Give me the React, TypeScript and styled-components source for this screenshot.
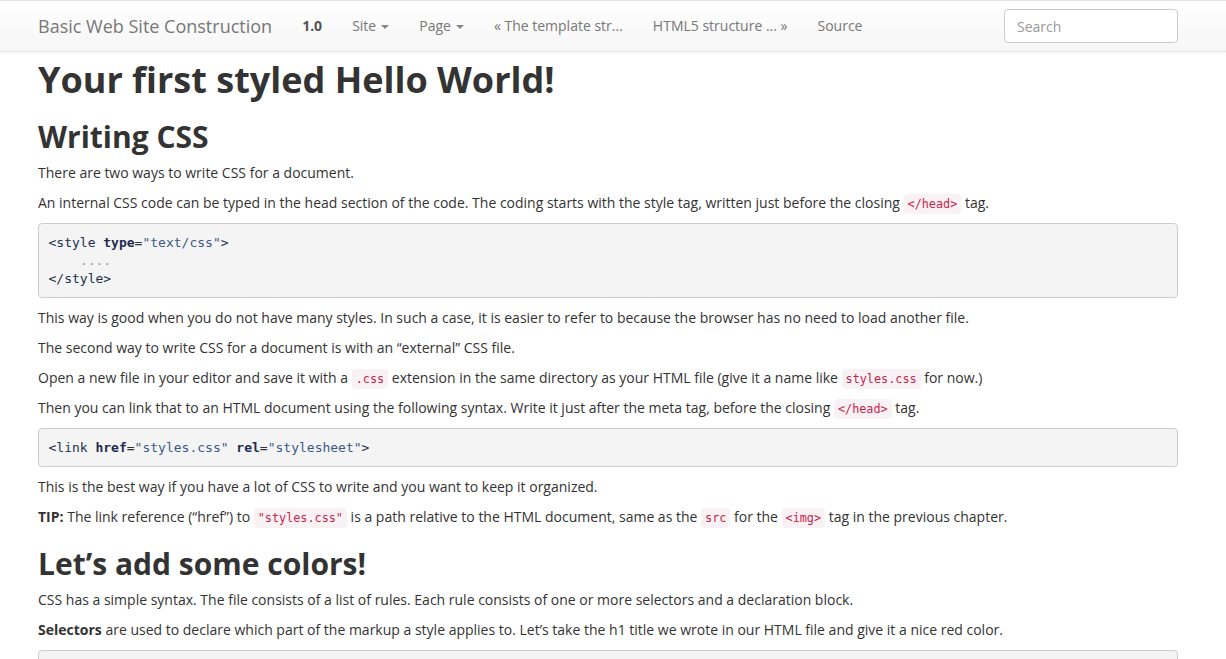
import React from "react";
import styled, { createGlobalStyle } from "styled-components";

const Global = createGlobalStyle`
  html, body { margin: 0; padding: 0; background: #fff; }
  body {
    font-family: "Open Sans", "Helvetica Neue", Arial, sans-serif;
    font-size: 14px;
    line-height: 20px;
    color: #333;
  }
  * { box-sizing: border-box; }
`;

const NavBar = styled.nav`
  height: 52px;
  border-top: 1px solid #e3e3e3;
  border-bottom: 1px solid #e3e3e3;
  background: linear-gradient(to bottom, #ffffff 0%, #f6f6f6 100%);
  box-shadow: 0 1px 5px rgba(0, 0, 0, 0.05);
`;

const NavInner = styled.div`
  width: 1140px;
  margin-left: 38px;
  height: 50px;
  display: flex;
  align-items: center;
`;

const Brand = styled.a`
  font-size: 18px;
  color: #777;
  text-decoration: none;
  margin-right: 15px;
  line-height: 20px;
`;

const NavList = styled.ul`
  display: flex;
  list-style: none;
  margin: 0;
  padding: 0;
  flex: 1;
`;

const NavItem = styled.li<{ $active?: boolean }>`
  padding: 15px;
  line-height: 20px;
  color: ${(p) => (p.$active ? "#555" : "#777")};
  font-weight: ${(p) => (p.$active ? 700 : 400)};
  white-space: nowrap;
`;

const Caret = styled.span`
  display: inline-block;
  width: 0;
  height: 0;
  margin-left: 5px;
  vertical-align: middle;
  border-top: 4px solid #888;
  border-left: 4px solid transparent;
  border-right: 4px solid transparent;
`;

const Search = styled.input`
  width: 174px;
  height: 34px;
  padding: 6px 12px;
  border: 1px solid #ccc;
  border-radius: 4px;
  font-family: "Open Sans", Arial, sans-serif;
  font-size: 14px;
  color: #555;
  background: #fff;
  &::placeholder { color: #999; }
`;

const Container = styled.main`
  width: 1140px;
  margin-left: 38px;
`;

const H1 = styled.h1`
  font-size: 36px;
  font-weight: 700;
  line-height: 1.1;
  margin: 8px 0 10px;
  color: #333;
`;

const H2 = styled.h2`
  font-size: 30px;
  font-weight: 700;
  line-height: 1.1;
  margin: 20px 0 10px;
  color: #333;
`;

const P = styled.p`
  margin: 0 0 10px;
`;

const Code = styled.code`
  font-family: "DejaVu Sans Mono", monospace;
  font-size: 11.8px;
  line-height: 1;
  padding: 3px 4px;
  color: #c7254e;
  background: #f9f2f4;
  border-radius: 4px;
`;

const Pre = styled.pre`
  font-family: "DejaVu Sans Mono", monospace;
  font-size: 13px;
  line-height: 18px;
  padding: 10px 9.5px 9px;
  margin: 0 0 10px;
  color: #333;
  background: #f4f4f4;
  border: 1px solid #ccc;
  border-radius: 4px;
  white-space: pre;
`;

const Tag = styled.span`
  color: #22304d;
`;
const Attr = styled.span`
  color: #1e2b50;
  font-weight: 700;
`;
const Str = styled.span`
  color: #3d5a86;
`;
const Dots = styled.span`
  color: #999;
`;

export default function App() {
  return (
    <>
      <Global />
      <NavBar>
        <NavInner>
          <Brand>Basic Web Site Construction</Brand>
          <NavList>
            <NavItem $active>1.0</NavItem>
            <NavItem>
              Site<Caret />
            </NavItem>
            <NavItem>
              Page<Caret />
            </NavItem>
            <NavItem>« The template str...</NavItem>
            <NavItem>HTML5 structure ... »</NavItem>
            <NavItem>Source</NavItem>
          </NavList>
          <Search placeholder="Search" />
        </NavInner>
      </NavBar>
      <Container>
        <H1>Your first styled Hello World!</H1>
        <H2>Writing CSS</H2>
        <P>There are two ways to write CSS for a document.</P>
        <P>
          An internal CSS code can be typed in the head section of the code. The coding starts with the style
          tag, written just before the closing <Code>&lt;/head&gt;</Code> tag.
        </P>
        <Pre>
          <Tag>&lt;style</Tag> <Attr>type</Attr>=<Str>"text/css"</Str>
          <Tag>&gt;</Tag>
          {"\n    "}
          <Dots>....</Dots>
          {"\n"}
          <Tag>&lt;/style&gt;</Tag>
        </Pre>
        <P>
          This way is good when you do not have many styles. In such a case, it is easier to refer to because
          the browser has no need to load another file.
        </P>
        <P>The second way to write CSS for a document is with an “external” CSS file.</P>
        <P>
          Open a new file in your editor and save it with a <Code>.css</Code> extension in the same directory as
          your HTML file (give it a name like <Code>styles.css</Code> for now.)
        </P>
        <P>
          Then you can link that to an HTML document using the following syntax. Write it just after the meta
          tag, before the closing <Code>&lt;/head&gt;</Code> tag.
        </P>
        <Pre>
          <Tag>&lt;link</Tag> <Attr>href</Attr>=<Str>"styles.css"</Str> <Attr>rel</Attr>=
          <Str>"stylesheet"</Str>
          <Tag>&gt;</Tag>
        </Pre>
        <P>This is the best way if you have a lot of CSS to write and you want to keep it organized.</P>
        <P>
          <strong>TIP:</strong> The link reference (“href”) to <Code>"styles.css"</Code> is a path relative to
          the HTML document, same as the <Code>src</Code> for the <Code>&lt;img&gt;</Code> tag in the previous
          chapter.
        </P>
        <H2>Let’s add some colors!</H2>
        <P>
          CSS has a simple syntax. The file consists of a list of rules. Each rule consists of one or more
          selectors and a declaration block.
        </P>
        <P>
          <strong>Selectors</strong> are used to declare which part of the markup a style applies to. Let’s take
          the h1 title we wrote in our HTML file and give it a nice red color.
        </P>
        <Pre>{" "}</Pre>
      </Container>
    </>
  );
}
